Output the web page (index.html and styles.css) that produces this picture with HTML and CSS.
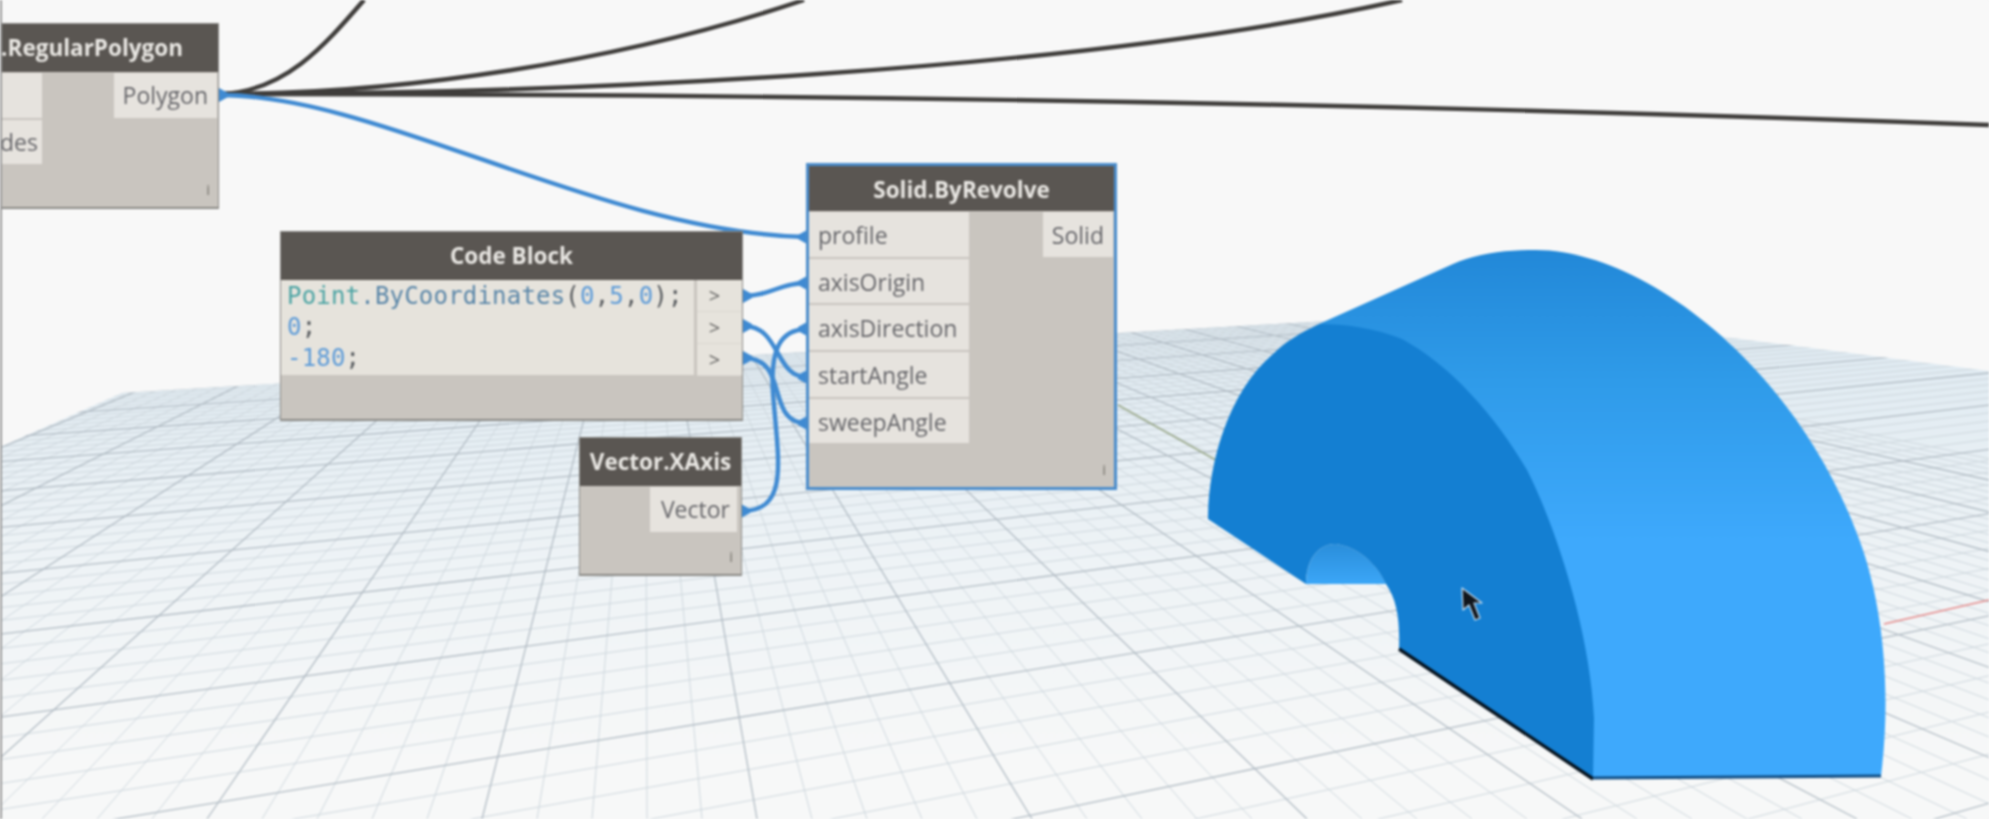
FILE: index.html
```html
<!DOCTYPE html>
<html lang="en">
<head>
    <meta charset="UTF-8">
    <title>Solid.ByRevolve graph</title>
    <link rel="stylesheet" href="styles.css">
</head>
<body>
    <div class="canvas">
        <svg class="scene" width="1989" height="819" viewBox="0 0 1989 819">
            <defs>
                <linearGradient id="floorFill" gradientUnits="userSpaceOnUse" x1="0" y1="320" x2="0" y2="760">
                    <stop offset="0" stop-color="#dde9f1"/>
                    <stop offset="0.55" stop-color="#eef3f6"/>
                    <stop offset="1" stop-color="#f7f8f8"/>
                </linearGradient>
                <linearGradient id="lightFace" gradientUnits="userSpaceOnUse" x1="0" y1="250" x2="0" y2="540">
                    <stop offset="0" stop-color="#2288d8"/>
                    <stop offset="0.45" stop-color="#2f9be9"/>
                    <stop offset="1" stop-color="#3ea9fc"/>
                </linearGradient>
                <linearGradient id="holeFace" gradientUnits="userSpaceOnUse" x1="0" y1="544" x2="0" y2="585">
                    <stop offset="0" stop-color="#2a8edb"/>
                    <stop offset="1" stop-color="#3ca7f8"/>
                </linearGradient>
                <clipPath id="floorClip">
                    <polygon points="0,447 122,393 1120,333 1517,310 1989,371 1989,819 0,819"/>
                </clipPath>
                <polygon id="tipOut" points="0,-7 9,-2 9,2 0,7"/>
                <polygon id="tipIn" points="0,-7 0,7 -9,2 -9,-2"/>
            </defs>

            <!-- floor -->
            <g clip-path="url(#floorClip)">
                <rect x="0" y="300" width="1989" height="519" fill="url(#floorFill)"/>
                <g class="grid-lines">
                    <g id="gridMinor" class="grid-minor"></g>
                    <g id="gridMajor" class="grid-major"></g>
                </g>
                <path class="axis-green" d="M1118 405 L1230 468"/>
                <path class="axis-red" d="M1884 624 L1989 600"/>
            </g>

            <!-- revolved solid -->
            <path fill="url(#lightFace)" d="M1319 324 L1453 264 C1478 253 1507 250 1536 250 C1640 250 1790 360 1856 531 C1880 590 1893 680 1881 776 L1593 778 L1500 500 Z"/>
            <path fill="url(#holeFace)" d="M1306 584 C1306 560 1318 544 1335 544 C1356 546 1376 562 1386 584 Z"/>
            <path class="solid-front" d="M1208 519 C1208 470 1225 395 1273 354 C1285 342 1300 333 1319 324 C1345 324 1375 328 1402 339 C1450 365 1495 415 1527 470 C1555 525 1590 630 1594 718 L1593 778 L1399 649 C1400 620 1397 600 1386 584 C1376 562 1356 546 1335 544 C1318 544 1306 560 1306 584 Z"/>
            <path class="edge-black" d="M1399 649 L1593 779"/>
            <path class="edge-blue" d="M1593 778 L1881 776"/>

            <!-- wires -->
            <path class="wire wire-dark" d="M220 94 C285 92 325 45 364 0"/>
            <path class="wire wire-dark" d="M220 94 C400 94 620 62 804 0"/>
            <path class="wire wire-dark" d="M220 94 C560 94 1080 72 1402 0"/>
            <path class="wire wire-dark" d="M220 94 C700 94 1300 100 1989 125"/>
            <path class="wire wire-blue" d="M220 95 C380 95 600 232 806 237"/>
            <path class="wire wire-blue" d="M744 296 C770 296 780 283 806 283"/>
            <path class="wire wire-blue" d="M744 326 C780 326 775 377 806 377"/>
            <path class="wire wire-blue" d="M744 358 C790 358 765 423 806 423"/>
            <path class="wire wire-blue" d="M742 511 C790 511 778 460 773 393 C770 350 780 330 806 329"/>
            <g class="wire-tips">
                <use href="#tipOut" x="219" y="95"/>
                <use href="#tipOut" x="743" y="296"/>
                <use href="#tipOut" x="743" y="326"/>
                <use href="#tipOut" x="743" y="358"/>
                <use href="#tipOut" x="741" y="511"/>
                <use href="#tipIn" x="807" y="237"/>
                <use href="#tipIn" x="807" y="283"/>
                <use href="#tipIn" x="807" y="329"/>
                <use href="#tipIn" x="807" y="377"/>
                <use href="#tipIn" x="807" y="423"/>
            </g>

            <!-- mouse pointer -->
            <path class="pointer" d="M1462 588 L1463 610 L1469 605 L1475 620 L1480 618 L1474 603 L1482 603 Z"/>
        </svg>

        <div class="node node-polygon">
            <div class="node-title">.RegularPolygon</div>
            <div class="node-body">
                <div class="ports">
                    <div class="port port-cut"></div>
                    <div class="port port-cut">des</div>
                </div>
                <div class="ports">
                    <div class="port">Polygon</div>
                </div>
            </div>
            <div class="node-info">i</div>
        </div>

        <div class="node node-code">
            <div class="node-title">Code Block</div>
            <div class="code-row">
                <div class="code-text">
                    <div><span class="code-class">Point</span><span class="code-name">.ByCoordinates</span><span class="code-punct">(</span><span class="code-num">0</span><span class="code-punct">,</span><span class="code-num">5</span><span class="code-punct">,</span><span class="code-num">0</span><span class="code-punct">);</span></div>
                    <div><span class="code-num">0</span><span class="code-punct">;</span></div>
                    <div><span class="code-num">-180</span><span class="code-punct">;</span></div>
                </div>
                <div class="code-ports">
                    <div class="code-port">&gt;</div>
                    <div class="code-port">&gt;</div>
                    <div class="code-port">&gt;</div>
                </div>
            </div>
        </div>

        <div class="node node-vector">
            <div class="node-title">Vector.XAxis</div>
            <div class="node-body">
                <div class="ports"></div>
                <div class="ports">
                    <div class="port">Vector</div>
                </div>
            </div>
            <div class="node-info">i</div>
        </div>

        <div class="node node-solid">
            <div class="node-title">Solid.ByRevolve</div>
            <div class="node-body">
                <div class="ports">
                    <div class="port port-input">profile</div>
                    <div class="port port-input">axisOrigin</div>
                    <div class="port port-input">axisDirection</div>
                    <div class="port port-input">startAngle</div>
                    <div class="port port-input">sweepAngle</div>
                </div>
                <div class="ports">
                    <div class="port">Solid</div>
                </div>
            </div>
            <div class="node-info">i</div>
        </div>
    </div>
    <script src="grid.js"></script>
</body>
</html>
```

FILE: styles.css
```css
* {
    margin: 0;
    padding: 0;
    box-sizing: border-box;
}

html, body {
    width: 100%;
    height: 100%;
    overflow: hidden;
    background: #f8f8f8;
}

.canvas {
    position: relative;
    width: 1989px;
    height: 819px;
    background: #f8f8f8;
    font-family: 'Open Sans', sans-serif;
    filter: blur(0.8px);
}

.canvas::before {
    content: "";
    position: absolute;
    left: 0;
    top: 0;
    bottom: 0;
    width: 2px;
    background: #9a9a9a;
    z-index: 2;
}

.scene {
    position: absolute;
    left: 0;
    top: 0;
}

/* floor */
.grid-lines {
    filter: blur(0.5px);
}

.grid-minor line {
    stroke: #ced7dd;
    stroke-width: 1;
}

.grid-major line {
    stroke: #b2bcc4;
    stroke-width: 1.3;
}

.axis-green {
    stroke: #9aa88a;
    stroke-width: 1.6;
    fill: none;
}

.axis-red {
    stroke: #e58a8a;
    stroke-width: 1.6;
    fill: none;
}

/* solid */
.solid-front {
    fill: #147fd2;
}

.edge-black {
    stroke: #05131f;
    stroke-width: 3.5;
    fill: none;
}

.edge-blue {
    stroke: #114f85;
    stroke-width: 3;
    fill: none;
}

.pointer {
    fill: #10151c;
    stroke: #cfe6f7;
    stroke-width: 1.2;
    stroke-linejoin: round;
}

/* wires */
.wire {
    fill: none;
    stroke-width: 4.4;
}

.wire-dark {
    stroke: #3f3d3b;
}

.wire-blue {
    stroke: #3f8ad2;
}

.wire-tips {
    fill: #3f8ad2;
}

/* nodes */
.node {
    position: absolute;
    display: flex;
    flex-direction: column;
    background: #c9c5bf;
    border: 1px solid #8b8a86;
    border-bottom-width: 2px;
}

.node-polygon {
    left: 0;
    top: 23px;
    width: 219px;
    height: 186px;
    border-left: none;
}

.node-polygon .node-title {
    padding-right: 35px;
    text-align: right;
}

.node-polygon .port {
    line-height: 45px;
}

.node-code {
    left: 280px;
    top: 231px;
    width: 463px;
    height: 190px;
}

.node-vector {
    left: 579px;
    top: 437px;
    width: 163px;
    height: 139px;
}

.node-solid {
    left: 806px;
    top: 163px;
    width: 311px;
    height: 327px;
    border: 3px solid #4a8ccb;
}

.node-title {
    flex: none;
    height: 48px;
    line-height: 48px;
    text-align: center;
    background: #5a5652;
    color: #e9e7e3;
    font-size: 22.5px;
    font-weight: 700;
    white-space: nowrap;
}

.node-solid .node-title {
    height: 45px;
    line-height: 47px;
}

.node-body {
    display: flex;
    justify-content: space-between;
    padding-right: 1px;
}

.ports {
    display: flex;
    flex-direction: column;
    gap: 2px;
    padding-top: 1px;
}

.port {
    height: 44.7px;
    line-height: 47px;
    padding: 0 9px;
    background: #e6e3de;
    color: #66666a;
    font-size: 23px;
    white-space: nowrap;
}

.port-cut {
    width: 42px;
    padding: 0 11px 0 0;
    text-align: right;
}

.port-input {
    width: 160px;
}

.node-vector .node-body {
    padding-right: 4px;
}

.node-vector .port {
    line-height: 45px;
    padding: 0 7px 0 11px;
}

.node-info {
    margin-top: auto;
    padding: 0 8px 9px 0;
    text-align: right;
    color: #77756f;
    font-size: 15px;
    line-height: 18px;
}

/* code block */
.code-row {
    display: flex;
    justify-content: space-between;
    height: 95px;
    background: #e6e3dc;
    padding-right: 1px;
}

.code-text {
    padding: 1px 0 0 6px;
    font-family: 'DejaVu Sans Mono', monospace;
    font-size: 24px;
    line-height: 31px;
    letter-spacing: 0.2px;
    white-space: nowrap;
}

.code-class {
    color: #4aa3a3;
}

.code-name {
    color: #5a86a8;
}

.code-punct {
    color: #54585c;
}

.code-num {
    color: #5d9bd8;
}

.code-ports {
    display: flex;
    flex-direction: column;
    width: 47px;
    border-left: 3px solid #c9c5bf;
}

.code-port {
    flex: 1;
    line-height: 31px;
    padding-right: 9px;
    text-align: center;
    color: #5f5f5e;
    font-size: 20px;
    border-bottom: 1px solid #dad7d1;
}
```

FILE: grid.js
```js
// perspective floor: every line runs to one of two vanishing points
var VP_RIGHT = { x: 4250, y: 145 };
var VP_LEFT = { x: 645, y: 180 };
var NS = 'http://www.w3.org/2000/svg';

function addLine(group, x1, y1, x2, y2) {
    var line = document.createElementNS(NS, 'line');
    line.setAttribute('x1', x1);
    line.setAttribute('y1', y1);
    line.setAttribute('x2', x2);
    line.setAttribute('y2', y2);
    group.appendChild(line);
}

var minor = document.getElementById('gridMinor');
var major = document.getElementById('gridMajor');

// lines heading to the right: spacing on x=0 is even in 1/distance from the horizon
var horizonAtZero = 186;
var farEdge = 0.004675;
var step = 0.000349 / 5;
for (var n = 0; n < 62; n++) {
    var u = farEdge - n * step;
    if (u <= 0) break;
    var y = horizonAtZero + 1 / u;
    addLine(n % 5 === 0 ? major : minor, 0, y, VP_RIGHT.x, VP_RIGHT.y);
}

// lines heading back to the left: even spacing along the bottom of the picture
for (var k = -20; k < 70; k++) {
    var x = -68 + k * 55;
    addLine(k % 5 === 0 ? major : minor, x, 819, VP_LEFT.x, VP_LEFT.y);
}
```
